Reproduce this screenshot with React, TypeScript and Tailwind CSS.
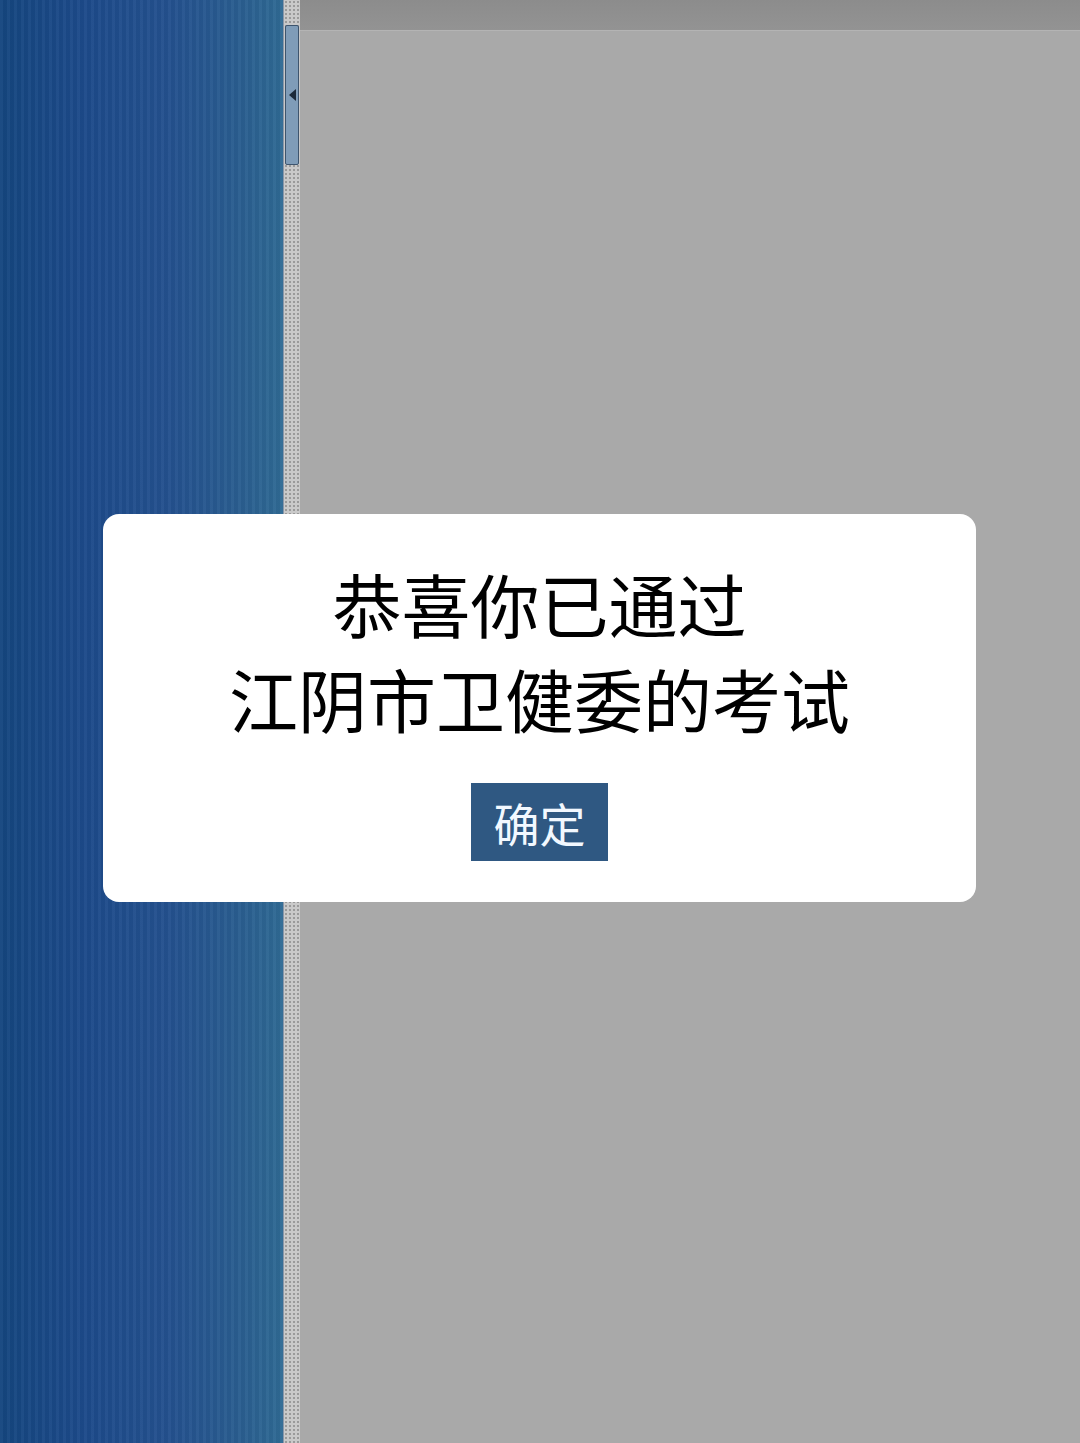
export default function App() {
  return (
    <div
      className="relative flex h-[1443px] w-[1080px] overflow-hidden"
      style={{ fontFamily: '"Noto Sans CJK SC", "Noto Sans", sans-serif' }}
    >
      {/* left blue pane */}
      <div className="h-full w-[283px] bg-[linear-gradient(90deg,#15467f_0%,#1d4a8a_30%,#24518e_60%,#2a5e90_85%,#2f6a94_100%)]">
        <div className="h-full w-full bg-[repeating-linear-gradient(90deg,rgba(255,255,255,0.03)_0px,rgba(255,255,255,0.03)_3px,rgba(0,0,0,0.03)_3px,rgba(0,0,0,0.03)_7px)]" />
      </div>

      {/* splitter */}
      <div className="relative h-full w-[17px] border-l border-[#8a97a8] bg-[#c9c9c9] bg-[radial-gradient(#9a9a9a_1px,transparent_1px)] bg-[length:4px_4px]">
        <div className="absolute left-[1px] top-[25px] flex h-[140px] w-[14px] items-center justify-center rounded-[2px] border border-[#3e556e] bg-[#7f9cb8]">
          <div className="h-0 w-0 border-y-[6px] border-r-[7px] border-y-transparent border-r-[#1c2a3a]" />
        </div>
      </div>

      {/* right grey pane */}
      <div className="flex h-full flex-1 flex-col bg-[#a9a9a9]">
        <div className="h-[30px] bg-[linear-gradient(180deg,#8c8c8c,#939393)]" />
        <div className="h-px bg-[#b4b4b4]" />
      </div>

      {/* dialog */}
      <div className="absolute left-[103px] top-[514px] flex h-[388px] w-[873px] flex-col items-center rounded-[16px] bg-white pt-[42px]">
        <div className="text-center text-[69px] leading-[95px] text-black">
          <div>恭喜你已通过</div>
          <div>江阴市卫健委的考试</div>
        </div>
        <button className="mt-[37px] flex h-[78px] w-[137px] items-center justify-center bg-[#2f5882] text-[46px] leading-none text-[#f2f8ff]">
          确定
        </button>
      </div>
    </div>
  );
}
